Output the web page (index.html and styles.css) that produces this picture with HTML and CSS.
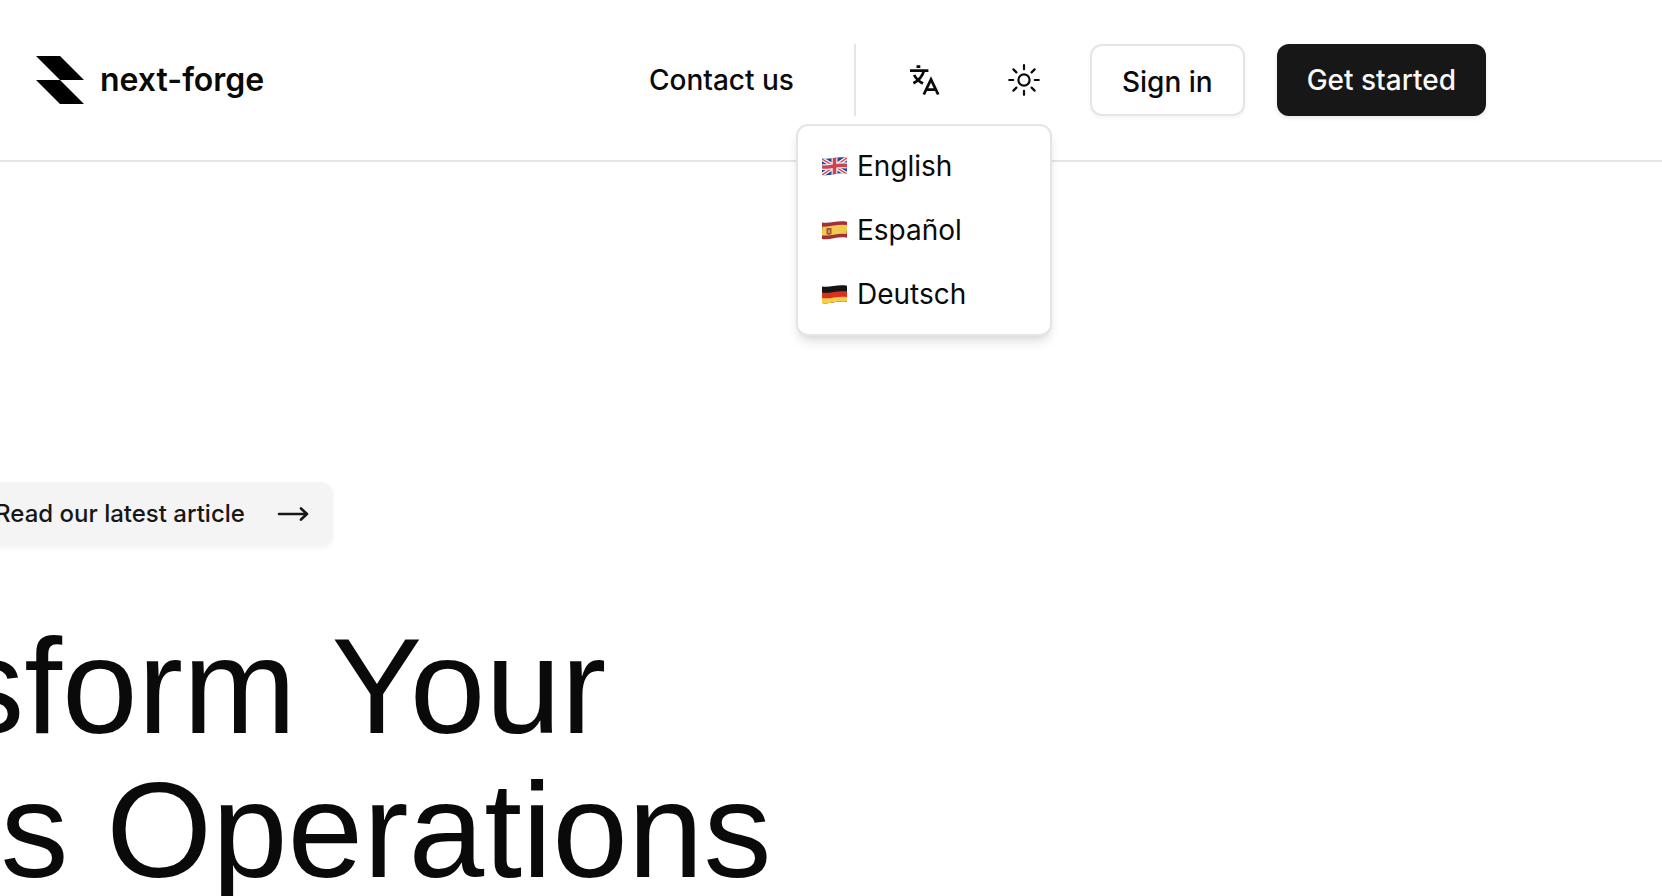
FILE: index.html
```html
<!DOCTYPE html>
<html lang="en">
<head>
<meta charset="utf-8">
<title>next-forge</title>
<link rel="stylesheet" href="styles.css">
</head>
<body>
<header class="header">
  <a class="brand" href="#">
    <svg class="brand-mark" viewBox="0 0 48 48" aria-hidden="true"><path d="M0 0H24L48 24H24L48 48H24L0 24H24Z"/></svg>
    <span>next-forge</span>
  </a>
  <nav class="nav">
    <a class="button button-ghost" href="#">Contact us</a>
    <span class="divider"></span>
    <div class="language">
      <button class="icon-button" type="button" aria-label="Switch language" aria-expanded="true">
        <svg class="icon" viewBox="0 0 32 32" fill="none" stroke="currentColor" stroke-width="2.8" aria-hidden="true"><path d="M8.500 2.600h3.800M2 6.600h18.400M15.800 7c-1.200 4.800-5 9.300-10.400 12.300M6.200 11c1.800 3.700 4.800 6.500 8.800 8.600M15.800 30.500l7.200-15L30.200 30.500M18.400 25.600h9.400"/></svg>
      </button>
      <div class="menu" role="menu">
        <button class="menu-item" type="button" role="menuitem">
          <svg class="flag" viewBox="0 0 25 19" aria-hidden="true">
            <defs><clipPath id="wave"><path d="M0 1.500C8 3 15-1 25 .8V16.800C15 15 9 19.500 0 18Z"/></clipPath></defs>
            <g clip-path="url(#wave)"><path fill="#264493" d="M0 0h25v19H0z"/><path stroke="#f0eef2" stroke-width="4" d="M0 2L25 17M0 18L25 1"/><path stroke="#cf4250" stroke-width="1.400" d="M0 2L25 17M0 18L25 1"/><path stroke="#f0eef2" stroke-width="6" d="M12.500 0v19"/><path fill="none" stroke="#f0eef2" stroke-width="6" d="M0 10C8 11 15 7 25 8.500"/><path stroke="#cf4250" stroke-width="3.500" d="M12.500 0v19"/><path fill="none" stroke="#cf4250" stroke-width="3.500" d="M0 10C8 11 15 7 25 8.500"/></g>
          </svg>
          <span>English</span>
        </button>
        <button class="menu-item" type="button" role="menuitem">
          <svg class="flag" viewBox="0 0 25 19" aria-hidden="true"><g clip-path="url(#wave)"><path fill="#a52f38" d="M0 0h25v19H0z"/><path fill="none" stroke="#eecb4c" stroke-width="9" d="M0 10C8 11 15 7 25 8.500"/><path fill="#a5552f" d="M4.500 7h5v6l-2.500 1-2.500-1z"/><path fill="#dba884" d="M6.300 9h1.600v3H6.300z"/></g></svg>
          <span>Español</span>
        </button>
        <button class="menu-item" type="button" role="menuitem">
          <svg class="flag" viewBox="0 0 25 19" aria-hidden="true"><g clip-path="url(#wave)"><path fill="#151515" d="M0 0h25v19H0z"/><path fill="#dc2f22" d="M0 7.500C8 9 15 5 25 6.500V19H0z"/><path fill="#f6cd46" d="M0 13C8 14.500 15 10.500 25 12v7H0z"/></g></svg>
          <span>Deutsch</span>
        </button>
      </div>
    </div>
    <button class="icon-button" type="button" aria-label="Toggle theme">
      <svg class="icon" viewBox="0 0 32 32" fill="none" stroke="currentColor" stroke-width="2.200" stroke-linecap="round" aria-hidden="true"><circle cx="16" cy="16" r="5.600"/><path d="M16 1.200v4M16 26.800v4M1.200 16h4M26.800 16h4M5.400 5.400l3 3M23.600 23.600l3 3M5.400 26.600l3-3M23.600 8.400l3-3"/></svg>
    </button>
    <a class="button button-outline" href="#">Sign in</a>
    <a class="button button-primary" href="#">Get started</a>
  </nav>
</header>
<main class="hero">
  <a class="article" href="#">
    <span>Read our latest article</span>
    <svg class="icon" viewBox="0 0 32 32" fill="none" stroke="currentColor" stroke-width="2.600" stroke-linecap="round" stroke-linejoin="round" aria-hidden="true"><path d="M2 16h28M24 10.500L30 16l-6 5.500"/></svg>
  </a>
  <h1 class="title">Transform Your<br>Business Operations</h1>
</main>
</body>
</html>
```
FILE: styles.css
```css
* {
  box-sizing: border-box;
}

body {
  margin: 0;
  min-height: 100vh;
  overflow: hidden;
  background: #fff;
  color: #0a0a0a;
  font-family: Inter, "Liberation Sans", sans-serif;
  font-size: 28px;
  line-height: 40px;
}

a {
  color: inherit;
  text-decoration: none;
}

button {
  border: 0;
  background: none;
  color: inherit;
  font: inherit;
}

.header {
  display: flex;
  align-items: center;
  justify-content: space-between;
  padding: 44px 176px 44px 36px;
  border-bottom: 2px solid #e5e5e5;
}

.brand {
  display: flex;
  align-items: center;
  gap: 16px;
  font-size: 32px;
  font-weight: 600;
}

.brand-mark {
  width: 48px;
  height: 48px;
  fill: #000;
}

.nav {
  display: flex;
  align-items: center;
  gap: 32px;
}

.button {
  padding: 16px 30px;
  border-radius: 12px;
  font-weight: 500;
  white-space: nowrap;
}

.button-ghost {
  padding: 16px 28px;
}

.button-outline {
  padding-top: 16px;
  padding-bottom: 12px;
  border: 2px solid #e5e5e5;
  box-shadow: 0 2px 4px rgb(0 0 0 / 5%);
}

.button-primary {
  background: #171717;
  color: #fafafa;
  box-shadow: 0 2px 4px rgb(0 0 0 / 10%);
}

.divider {
  width: 2px;
  height: 72px;
  margin-right: 2px;
  background: #e5e5e5;
}

.icon-button {
  display: flex;
  align-items: center;
  justify-content: center;
  width: 68px;
  height: 72px;
  padding: 0;
}

.icon {
  width: 32px;
  height: 32px;
}

.language {
  position: relative;
}

.menu {
  position: absolute;
  top: 80px;
  left: 50%;
  width: 256px;
  padding: 8px;
  border: 2px solid #e5e5e5;
  border-radius: 12px;
  background: #fff;
  box-shadow: 0 8px 12px -2px rgb(0 0 0 / 10%), 0 4px 8px -4px rgb(0 0 0 / 10%);
  transform: translateX(-50%);
}

.menu-item {
  display: flex;
  align-items: center;
  gap: 10px;
  width: 100%;
  padding: 12px 16px;
  text-align: left;
}

.flag {
  width: 25px;
  height: 19px;
}

.hero {
  display: flex;
  flex-direction: column;
  align-items: center;
  gap: 68px;
  margin-left: calc(288px - 100%);
  padding-top: 320px;
}

.article {
  display: flex;
  align-items: center;
  gap: 32px;
  padding: 12px 24px 12px 40px;
  border-radius: 12px;
  background: #f4f4f4;
  color: #171717;
  box-shadow: 0 2px 4px rgb(0 0 0 / 5%);
  font-size: 24px;
  font-weight: 500;
}

.title {
  margin: 0;
  font-family: "Liberation Sans", Arial, sans-serif;
  font-size: 136px;
  font-weight: 400;
  line-height: 144px;
  text-align: center;
  white-space: nowrap;
}
```
